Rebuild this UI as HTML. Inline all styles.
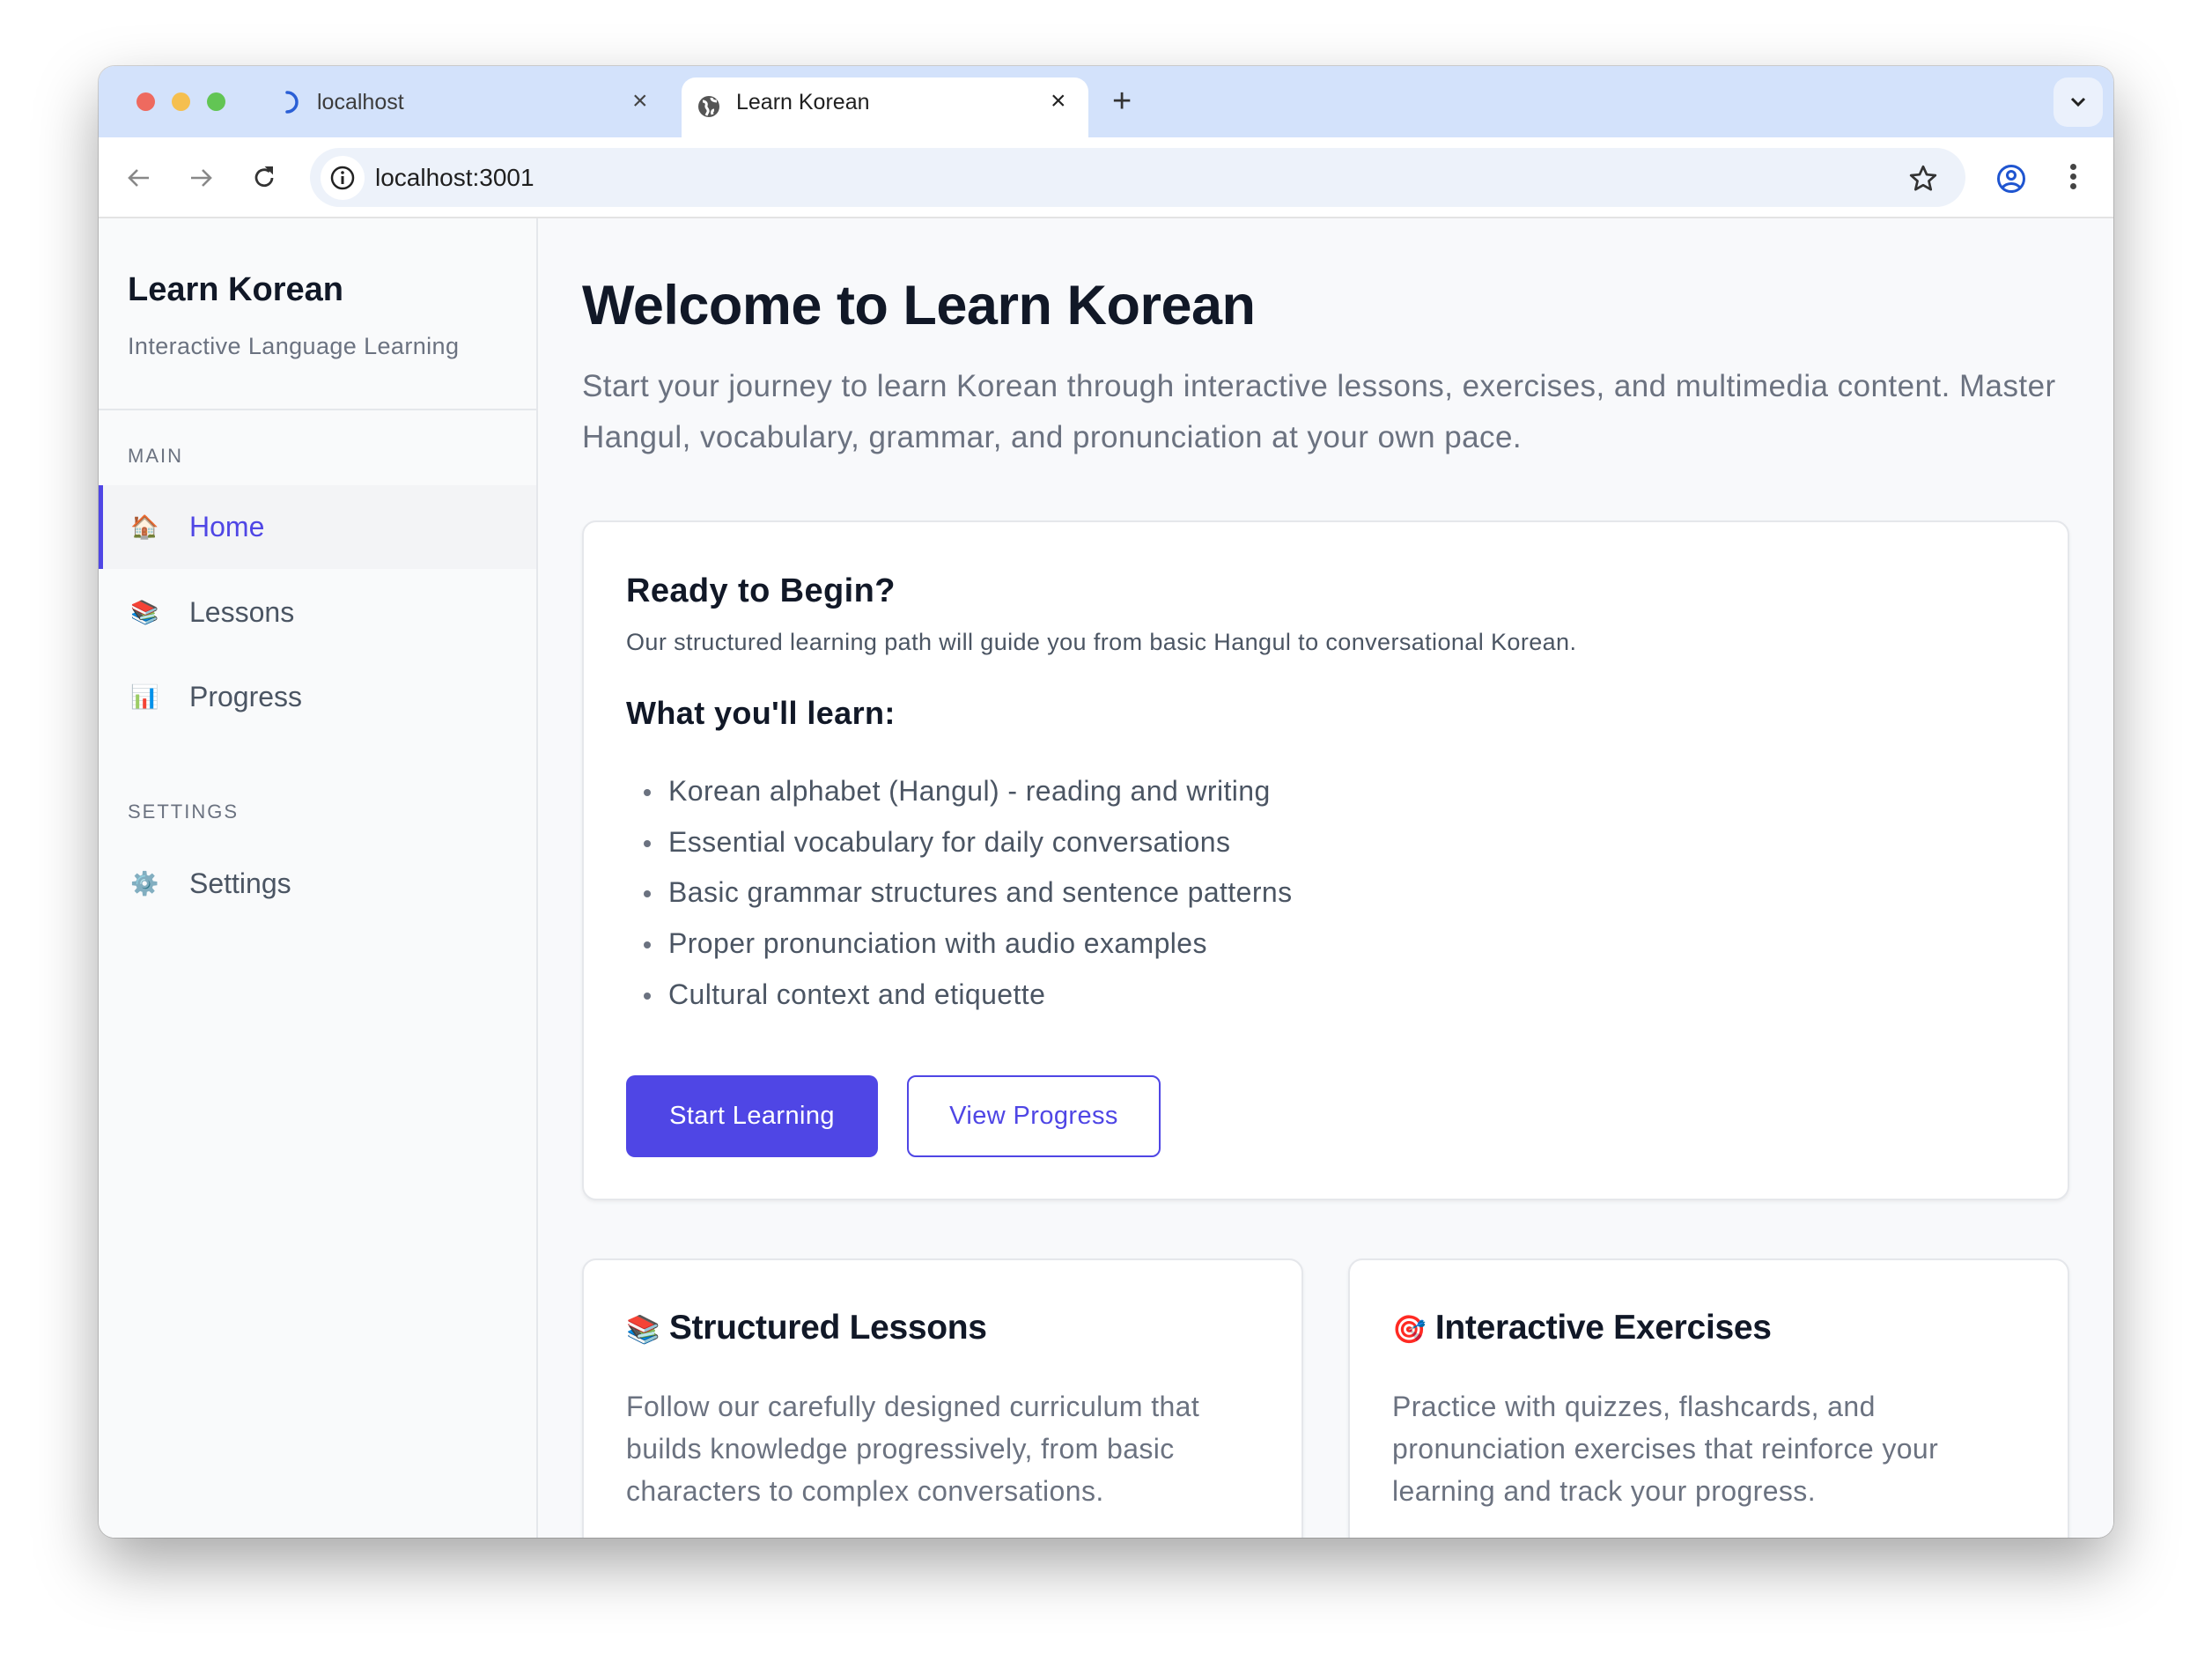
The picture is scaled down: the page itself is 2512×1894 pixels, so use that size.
<!DOCTYPE html>
<html><head><meta charset="utf-8"><style>
*{box-sizing:border-box;margin:0;padding:0}
body{width:2512px;height:1894px;background:#fff;font-family:"Liberation Sans","Noto Sans CJK KR",sans-serif;position:relative;overflow:hidden}
.win{position:absolute;left:112px;top:75px;width:2288px;height:1671px;border-radius:18px;overflow:hidden;background:#f9fafb;box-shadow:0 30px 70px rgba(0,0,0,.35),0 0 0 1px rgba(0,0,0,.15)}
.tabbar{position:absolute;left:0;top:0;width:100%;height:81px;background:#d3e2fb}
.dot{position:absolute;top:30px;width:21px;height:21px;border-radius:50%}
.abs{position:absolute}
.toolbar{position:absolute;left:0;top:81px;width:100%;height:92px;background:#fff;border-bottom:2px solid #e3e3e3}
.omni{position:absolute;left:240px;top:12px;width:1880px;height:67px;border-radius:34px;background:#edf2fa}
.side{position:absolute;left:0;top:173px;width:499px;height:1500px;background:#f9fafb;border-right:2px solid #e5e7eb}
.main{position:absolute;left:501px;top:173px;right:0;bottom:0;background:#f8f9fb;letter-spacing:0.4px}
.item{position:absolute;left:0;width:497px;height:95px;font-size:32px;color:#4b5563;line-height:95px}
.item .ic{position:absolute;left:36px;top:0;font-size:26px}
.item .t{position:absolute;left:103px}
.lbl{position:absolute;left:33px;font-size:22px;letter-spacing:2px;color:#6b7280}
.card{position:absolute;background:#fff;border:2px solid #e5e7eb;border-radius:16px;box-shadow:0 2px 4px rgba(0,0,0,.06)}
li{list-style:none;position:relative;font-size:32px;color:#4b5563;height:57.7px;line-height:57.7px;padding-left:48px}
li:before{content:"";position:absolute;left:20px;top:26px;width:8px;height:8px;border-radius:50%;background:#6b7280}
</style></head><body>
<div class="win">
 <div class="tabbar">
  <div class="dot" style="left:43px;background:#ee6a5f"></div>
  <div class="dot" style="left:83px;background:#f5bf4f"></div>
  <div class="dot" style="left:123px;background:#62c554"></div>
  <svg class="abs" style="left:208px;top:27px" width="26" height="28" viewBox="0 0 26 28"><path d="M6 3 A11 11 0 0 1 6 25" fill="none" stroke="#2a5fd6" stroke-width="3.5" stroke-linecap="round"/></svg>
  <div class="abs" style="left:248px;top:27px;font-size:25px;color:#3c3c3c">localhost</div>
  <div class="abs" style="left:606px;top:23px;font-size:30px;color:#444">×</div>
  <div class="abs" style="left:662px;top:13px;width:462px;height:68px;background:#fff;border-radius:16px 16px 0 0"></div>
  <svg class="abs" style="left:679px;top:32px" width="28" height="28" viewBox="0 0 28 28"><circle cx="14" cy="14" r="12" fill="#555"/><path d="M7 8c3 0 5 2 4 5s3 3 2 7l-2 4M17 4c0 3 3 4 6 4M20 18c-2 0-3 2-2 5" stroke="#fff" stroke-width="3" fill="none"/></svg>
  <div class="abs" style="left:724px;top:27px;font-size:25px;color:#1f1f1f">Learn Korean</div>
  <div class="abs" style="left:1081px;top:23px;font-size:30px;color:#222">×</div>
  <div class="abs" style="left:1151px;top:19px;font-size:38px;color:#333">+</div>
  <div class="abs" style="left:2220px;top:13px;width:56px;height:56px;border-radius:16px;background:#ebf1fc"></div>
  <svg class="abs" style="left:2238px;top:34px" width="20" height="14" viewBox="0 0 20 14"><path d="M3 3l7 7 7-7" stroke="#222" stroke-width="3" fill="none"/></svg>
 </div>
 <div class="toolbar">
  <svg class="abs" style="left:30px;top:30px" width="32" height="32" viewBox="0 0 32 32"><path d="M27 16H6M14 7l-9 9 9 9" stroke="#888" stroke-width="2.6" fill="none"/></svg>
  <svg class="abs" style="left:100px;top:30px" width="32" height="32" viewBox="0 0 32 32"><path d="M5 16h21M18 7l9 9-9 9" stroke="#888" stroke-width="2.6" fill="none"/></svg>
  <svg class="abs" style="left:172px;top:30px" width="32" height="32" viewBox="0 0 32 32"><path d="M25 16a9 9 0 1 1-3-7" stroke="#333" stroke-width="2.8" fill="none"/><path d="M19 4h6v6z" fill="#333" stroke="#333" stroke-width="2"/></svg>
  <div class="omni">
   <div class="abs" style="left:12px;top:9px;width:50px;height:50px;border-radius:50%;background:#fff"></div>
   <svg class="abs" style="left:22px;top:19px" width="30" height="30" viewBox="0 0 30 30"><circle cx="15" cy="15" r="12" stroke="#222" stroke-width="2.5" fill="none"/><path d="M15 13v9" stroke="#222" stroke-width="3"/><circle cx="15" cy="9" r="1.8" fill="#222"/></svg>
   <div class="abs" style="left:74px;top:18px;font-size:28px;color:#1f1f1f">localhost:3001</div>
  </div>
  <svg class="abs" style="left:2054px;top:29px" width="36" height="36" viewBox="0 0 24 24"><path d="M12 2.8l2.7 6 6.5.6-4.9 4.3 1.5 6.4L12 16.8l-5.8 3.3 1.5-6.4-4.9-4.3 6.5-.6z" stroke="#333" stroke-width="1.8" fill="none" stroke-linejoin="round"/></svg>
  <svg class="abs" style="left:2155px;top:30px" width="34" height="34" viewBox="0 0 34 34"><circle cx="17" cy="17" r="14.5" stroke="#1f55d0" stroke-width="3" fill="none"/><circle cx="17" cy="13" r="4.5" stroke="#1f55d0" stroke-width="3" fill="none"/><path d="M7 27c5-6 15-6 20 0" stroke="#1f55d0" stroke-width="3" fill="none"/></svg>
  <div class="abs" style="left:2239px;top:30px;width:7px;height:7px;border-radius:50%;background:#444;box-shadow:0 11px 0 #444,0 22px 0 #444"></div>
 </div>
 <div class="side">
  <div class="abs" style="left:33px;top:60px;font-size:38px;font-weight:600;color:#111827">Learn Korean</div>
  <div class="abs" style="left:33px;top:130px;font-size:27px;color:#6b7280;letter-spacing:0.4px">Interactive Language Learning</div>
  <div class="abs" style="left:0;top:216px;width:497px;height:2px;background:#e5e7eb"></div>
  <div class="lbl" style="top:257px">MAIN</div>
  <div class="item" style="top:303px;background:#f3f4f6;border-left:5px solid #4f46e5;color:#4f46e5"><span class="ic" style="left:31px">🏠</span><span class="t" style="left:98px">Home</span></div>
  <div class="item" style="top:400px"><span class="ic">📚</span><span class="t">Lessons</span></div>
  <div class="item" style="top:496px"><span class="ic">📊</span><span class="t">Progress</span></div>
  <div class="lbl" style="top:661px">SETTINGS</div>
  <div class="item" style="top:708px"><span class="ic">⚙️</span><span class="t">Settings</span></div>
 </div>
 <div class="main">
  <div class="abs" style="left:48px;top:63px;font-size:63px;font-weight:700;color:#111827;letter-spacing:-0.5px">Welcome to Learn Korean</div>
  <div class="abs" style="left:48px;top:162px;width:1730px;font-size:35px;line-height:58px;color:#6b7280;letter-spacing:0.45px">Start your journey to learn Korean through interactive lessons, exercises, and multimedia content. Master Hangul, vocabulary, grammar, and pronunciation at your own pace.</div>
  <div class="card" style="left:48px;top:343px;width:1689px;height:772px">
   <div class="abs" style="left:48px;top:57px;font-size:38px;font-weight:600;color:#111827">Ready to Begin?</div>
   <div class="abs" style="left:48px;top:121px;font-size:27px;color:#4b5563">Our structured learning path will guide you from basic Hangul to conversational Korean.</div>
   <div class="abs" style="left:48px;top:196px;font-size:36px;font-weight:700;color:#111827">What you'll learn:</div>
   <ul class="abs" style="left:48px;top:277px">
    <li>Korean alphabet (Hangul) - reading and writing</li>
    <li>Essential vocabulary for daily conversations</li>
    <li>Basic grammar structures and sentence patterns</li>
    <li>Proper pronunciation with audio examples</li>
    <li>Cultural context and etiquette</li>
   </ul>
   <div class="abs" style="left:48px;top:628px;width:286px;height:93px;border-radius:10px;background:#4f46e5;color:#fff;font-size:29px;text-align:center;line-height:93px">Start Learning</div>
   <div class="abs" style="left:367px;top:628px;width:288px;height:93px;border-radius:10px;border:2px solid #4f46e5;color:#4f46e5;font-size:29px;text-align:center;line-height:89px">View Progress</div>
  </div>
  <div class="card" style="left:48px;top:1181px;width:819px;height:480px">
   <div class="abs" style="left:48px;top:55px;font-size:39px;font-weight:600;color:#111827;letter-spacing:-0.3px"><span style="font-size:31px">📚</span> Structured Lessons</div>
   <div class="abs" style="left:48px;top:142px;width:700px;font-size:32px;line-height:48px;color:#6b7280">Follow our carefully designed curriculum that builds knowledge progressively, from basic characters to complex conversations.</div>
  </div>
  <div class="card" style="left:918px;top:1181px;width:819px;height:480px">
   <div class="abs" style="left:48px;top:55px;font-size:39px;font-weight:600;color:#111827;letter-spacing:-0.3px"><span style="font-size:31px">🎯</span> Interactive Exercises</div>
   <div class="abs" style="left:48px;top:142px;width:700px;font-size:32px;line-height:48px;color:#6b7280">Practice with quizzes, flashcards, and pronunciation exercises that reinforce your learning and track your progress.</div>
  </div>
 </div>
</div>
</body></html>
